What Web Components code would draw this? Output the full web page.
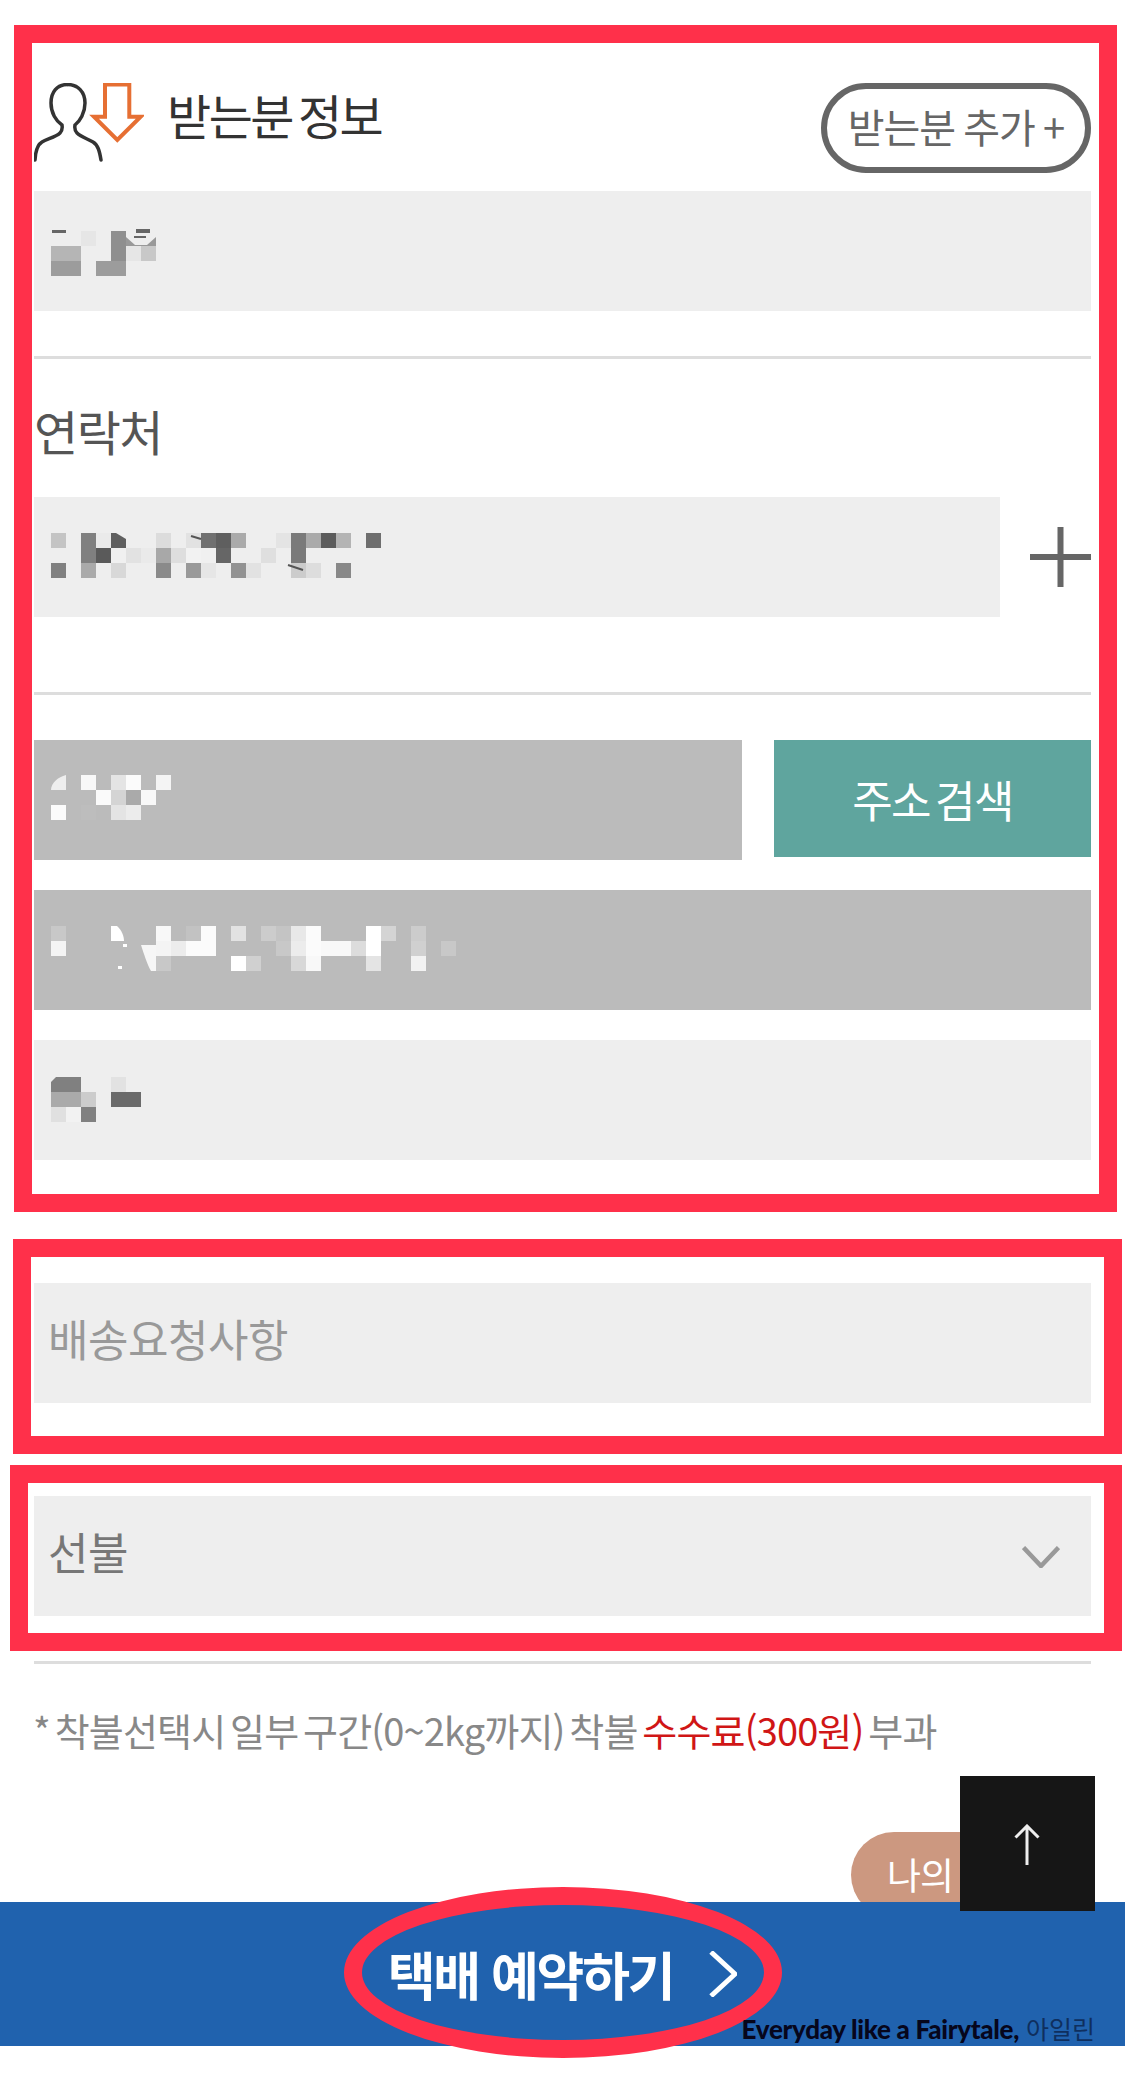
<!doctype html>
<html lang="ko">
<head>
<meta charset="utf-8">
<title>택배 예약</title>
<style>
	html, body { margin: 0; background: #fff; }
	body { width: 1125px; height: 2076px; overflow: hidden; position: relative; font-family: "Noto Sans CJK KR", "Noto Sans", sans-serif; }
</style>
</head>
<body>
	<red-frame style="--ml:14px;--mt:25px;--mr:8px;--pt:40px;--pr:8px;--pb:34px;--pl:2px">
		<receiver-head></receiver-head>
		<form-field style="margin-top:18px;--pad:40px"><pixel-blur id="name"></pixel-blur></form-field>
		<line-rule style="margin-top:45px"></line-rule>
		<field-label>연락처</field-label>
		<phone-row><form-field style="--pad:36px"><pixel-blur id="phone"></pixel-blur></form-field></phone-row>
		<line-rule style="margin-top:75px"></line-rule>
		<zip-row style="margin-top:45px"><form-field tone="dark" style="--pad:35px"><pixel-blur id="zip"></pixel-blur></form-field></zip-row>
		<form-field tone="dark" style="margin-top:30px;--pad:36px"><pixel-blur id="addr"></pixel-blur></form-field>
		<form-field style="margin-top:30px;--pad:37px"><pixel-blur id="detail"></pixel-blur></form-field>
	</red-frame>

	<red-frame style="--ml:13px;--mt:27px;--mr:3px;--pt:26px;--pr:13px;--pb:33px;--pl:3px">
		<form-field center style="color:#999">배송요청사항</form-field>
	</red-frame>

	<red-frame style="--ml:10px;--mt:11px;--mr:3px;--pt:13px;--pr:13px;--pb:17px;--pl:6px">
		<form-field center arrow style="color:#777">선불</form-field>
	</red-frame>

	<fee-note></fee-note>
	<tracking-pill>나의 택배</tracking-pill>
	<booking-bar></booking-bar>
	<scroll-top></scroll-top>

<script>
const mosaics = {
	name: {
		cells: [
			[0, 2, '#e6e6e6'], [0, 4, '#8f8f8f'], [0, 5, '#999'], [0, 6, '#999'],
			[1, 0, '#b5b5b5'], [1, 1, '#b5b5b5'], [1, 4, '#8f8f8f'], [1, 5, '#e6e6e6'], [1, 6, '#c8c8c8'],
			[2, 0, '#9c9c9c'], [2, 1, '#9c9c9c'], [2, 3, '#9c9c9c'], [2, 4, '#9c9c9c']
		],
		// smears the pixelation left behind
		extras: `<path d="M75 0H105V6L96 14H84L75 6Z" fill="#eee"/><rect x="1" y="-1" width="14" height="3" fill="#666"/><rect x="85" y="-2" width="14" height="4" fill="#666"/><rect x="83" y="5" width="12" height="2" fill="#666"/>`
	},
	phone: {
		cells: [
			[0, 0, '#c4c4c4'], [0, 2, '#808080'], [0, 3, '#eaeaea'], [0, 4, '#5f5f5f'], [0, 7, '#dcdcdc'], [0, 9, '#e2e2e2'],
			[0, 10, '#707070'], [0, 11, '#5f5f5f'], [0, 12, '#aaa'], [0, 15, '#e4e4e4'], [0, 16, '#7a7a7a'], [0, 17, '#aaa'],
			[0, 18, '#5c5c5c'], [0, 19, '#b4b4b4'], [0, 21, '#6e6e6e'],
			[1, 2, '#808080'], [1, 3, '#5a5a5a'], [1, 4, '#f0f0f0'], [1, 5, '#e2e2e2'], [1, 6, '#eaeaea'], [1, 7, '#a8a8a8'],
			[1, 8, '#dedede'], [1, 9, '#f2f2f2'], [1, 10, '#f0f0f0'], [1, 11, '#666'], [1, 14, '#dfdfdf'], [1, 16, '#7a7a7a'],
			[2, 0, '#808080'], [2, 2, '#aaa'], [2, 4, '#d8d8d8'], [2, 7, '#8a8a8a'], [2, 9, '#999'], [2, 10, '#e6e6e6'],
			[2, 12, '#929292'], [2, 13, '#e2e2e2'], [2, 16, '#ccc'], [2, 17, '#ddd'], [2, 19, '#888']
		],
		extras: `<path d="M65 0H60V15H75V6Z" fill="#5f5f5f"/><path d="M65 0H75V6Z" fill="#eee"/><path d="M140 3 150 6" stroke="#555" stroke-width="2"/><path d="M237 32 252 37" stroke="#555" stroke-width="2"/>`
	},
	zip: {
		cells: [
			[0, 2, '#f8f8f8'], [0, 4, '#e4e4e4'], [0, 5, '#fbfbfb'], [0, 7, '#f4f4f4'],
			[1, 3, '#fafafa'], [1, 4, '#d4d4d4'], [1, 5, '#aaa'], [1, 6, '#f8f8f8'],
			[2, 0, '#fbfbfb'], [2, 2, '#bdbdbd'], [2, 4, '#e4e4e4'], [2, 5, '#ececec']
		],
		extras: `<path d="M15 0V15H0C0 8 7 2 15 0Z" fill="#eee"/>`
	},
	addr: {
		cells: [
			[0, 0, '#c8c8c8'], [0, 7, '#f8f8f8'], [0, 9, '#c2c2c2'], [0, 10, '#fbfbfb'], [0, 12, '#e2e2e2'],
			[0, 14, '#ccc'], [0, 15, '#c4c4c4'], [0, 16, '#e8e8e8'], [0, 17, '#fbfbfb'], [0, 21, '#fff'], [0, 22, '#d4d4d4'], [0, 24, '#ccc'],
			[1, 0, '#f4f4f4'], [1, 7, '#f4f4f4'], [1, 8, '#ececec'], [1, 9, '#fbfbfb'], [1, 10, '#fbfbfb'],
			[1, 15, '#c8c8c8'], [1, 16, '#ececec'], [1, 17, '#fbfbfb'], [1, 18, '#f8f8f8'], [1, 19, '#f8f8f8'], [1, 20, '#dcdcdc'],
			[1, 21, '#fff'], [1, 24, '#d0d0d0'], [1, 26, '#c8c8c8'],
			[2, 7, '#c8c8c8'], [2, 12, '#fff'], [2, 13, '#d0d0d0'], [2, 16, '#d8d8d8'], [2, 17, '#f8f8f8'], [2, 21, '#e4e4e4'], [2, 24, '#f2f2f2']
		],
		extras: `<path d="M60 0H66C71 4 73 11 73 15H60Z" fill="#fff"/><path d="M90 19H105V45H100C96 38 93 28 90 19Z" fill="#f6f6f6"/><rect x="72" y="18" width="4" height="3" fill="#fff"/><rect x="67" y="40" width="4" height="3" fill="#fff"/>`
	},
	detail: {
		cells: [
			[0, 0, '#808080'], [0, 1, '#808080'], [0, 4, '#e2e2e2'],
			[1, 0, '#aaa'], [1, 1, '#aaa'], [1, 2, '#ccc'], [1, 4, '#6a6a6a'], [1, 5, '#6a6a6a'],
			[2, 0, '#e0e0e0'], [2, 1, '#f2f2f2'], [2, 2, '#808080']
		],
		extras: `<path d="M0 0H5L0 5Z" fill="#eee"/>`
	}
};

const CELL = 15;

function shadow(el, html) {
	el.attachShadow({ mode: 'open' }).innerHTML = html;
}

class RedFrame extends HTMLElement {
	constructor() {
		super();
		shadow(this, `<style>
			:host {
				display: block;
				box-sizing: border-box;
				margin: var(--mt) var(--mr) 0 var(--ml);
				padding: var(--pt) var(--pr) var(--pb) var(--pl);
				border: 18px solid #ff304a;
				background: #fff;
			}
		</style><slot></slot>`);
	}
}

class FormField extends HTMLElement {
	constructor() {
		super();
		const arrow = this.hasAttribute('arrow')
			? `<svg width="38" height="22" viewBox="0 0 38 22"><path d="M1.5 1.5 19 20 36.5 1.5" fill="none" stroke="#999" stroke-width="4.500"/></svg>`
			: '';
		shadow(this, `<style>
			:host {
				display: flex;
				box-sizing: border-box;
				height: 120px;
				padding: var(--pad, 0) 31px 0 17px;
				background: #eee;
				font-size: 44px;
				letter-spacing: -0.500px;
			}
			:host([tone="dark"]) { background: #bbb; }
			:host([center]) { align-items: center; justify-content: space-between; padding: 0 31px 0 14px; }
			:host([center]) span { position: relative; top: -5px; }
			svg { position: relative; top: 1px; }
		</style><span><slot></slot></span>${arrow}`);
	}
}

class PixelBlur extends HTMLElement {
	constructor() {
		super();
		const { cells, extras } = mosaics[this.id];
		const rects = cells
			.map(([row, col, fill]) => `<rect x="${col * CELL}" y="${row * CELL}" width="${CELL}" height="${CELL}" fill="${fill}"/>`)
			.join('');
		shadow(this, `<style>
			:host { display: block; height: 45px; }
			svg { display: block; overflow: visible; }
		</style><svg width="420" height="45"><g shape-rendering="crispEdges">${rects}</g>${extras}</svg>`);
	}
}

class LineRule extends HTMLElement {
	constructor() {
		super();
		shadow(this, `<style>:host { display: block; height: 3px; background: #ddd; }</style>`);
	}
}

class FieldLabel extends HTMLElement {
	constructor() {
		super();
		shadow(this, `<style>
			:host {
				display: block;
				height: 138px;
				padding-top: 41px;
				box-sizing: border-box;
				font-size: 48px;
				line-height: 60px;
				letter-spacing: -1.500px;
				color: #555;
			}
		</style><slot></slot>`);
	}
}

class ReceiverHead extends HTMLElement {
	constructor() {
		super();
		shadow(this, `<style>
			:host { display: flex; justify-content: space-between; align-items: flex-start; height: 90px; }
			.left { display: flex; gap: 23px; }
			svg { display: block; }
			h2 { margin: 0; font-size: 48px; line-height: 62px; font-weight: 400; letter-spacing: -2.500px; word-spacing: -5px; color: #333; }
			button {
				box-sizing: border-box;
				width: 270px;
				height: 90px;
				padding: 0 0 4px;
				border: 6px solid #666;
				border-radius: 45px;
				background: #fff;
				font: inherit;
				font-size: 40px;
				letter-spacing: -1px;
				word-spacing: -2px;
				color: #666;
			}
		</style>
		<div class="left">
			<svg width="110" height="80" viewBox="34 83 110 80" fill="none">
				<g transform="translate(34 83)" stroke="#333" stroke-width="3.500" stroke-linecap="round">
					<path d="M33.500 1.500C23 1.500 17 9 17 20 17 30 22 38 28 42 28.500 45 28 48 26 50 22 54 13 56 8 59 3 62 1.500 68 1 77"/>
					<path d="M33.500 1.500C44 1.500 51 9 51 20 51 30 46 38 41 42 40.500 45 41 48 43 50 47 54 54 56 59 59 64 62 65.500 68 67 77"/>
				</g>
				<path d="M105 84.500H129.300V116.700H140.700L117.300 140 94 116.700H105Z" stroke="#e66f33" stroke-width="4"/>
			</svg>
			<h2>받는분 정보</h2>
		</div>
		<button>받는분 추가 +</button>`);
	}
}

class PhoneRow extends HTMLElement {
	constructor() {
		super();
		shadow(this, `<style>
			:host { display: flex; justify-content: space-between; align-items: center; }
			::slotted(*) { width: 966px; }
			svg { display: block; }
		</style><slot></slot>
		<svg width="61" height="60" viewBox="0 0 61 60"><path d="M0 30H61M30.500 0V60" stroke="#666" stroke-width="6"/></svg>`);
	}
}

class ZipRow extends HTMLElement {
	constructor() {
		super();
		shadow(this, `<style>
			:host { display: flex; justify-content: space-between; align-items: flex-start; }
			::slotted(*) { width: 708px; }
			button {
				width: 317px;
				height: 117px;
				padding: 0;
				border: 0;
				background: #5fa59e;
				color: #fff;
				font: inherit;
				font-size: 44px;
				letter-spacing: -1.500px;
				word-spacing: -6px;
			}
		</style><slot></slot><button>주소 검색</button>`);
	}
}

class FeeNote extends HTMLElement {
	constructor() {
		super();
		shadow(this, `<style>
			:host { display: block; margin: 10px 34px 0; height: 241px; }
			hr { margin: 0; height: 3px; border: 0; background: #ddd; }
			p { margin: 40px 0 0 -1px; font-size: 38px; line-height: 52px; letter-spacing: -0.850px; word-spacing: -5px; color: #888; white-space: nowrap; }
			b { font-weight: 400; color: #d01616; }
		</style><hr><p>* 착불선택시 일부 구간(0~2kg까지) 착불 <b>수수료(300원)</b> 부과</p>`);
	}
}

class TrackingPill extends HTMLElement {
	constructor() {
		super();
		shadow(this, `<style>
			:host {
				position: absolute;
				left: 851px;
				top: 1832px;
				box-sizing: border-box;
				width: 224px;
				height: 86px;
				padding: 0 0 2px 36px;
				display: flex;
				align-items: center;
				border-radius: 43px;
				background: #cc9880;
				color: #fff;
				font-size: 37px;
				letter-spacing: -1px;
			}
		</style><slot></slot>`);
	}
}

class BookingBar extends HTMLElement {
	constructor() {
		super();
		shadow(this, `<style>
			:host {
				position: relative;
				display: flex;
				align-items: center;
				justify-content: center;
				gap: 36px;
				height: 144px;
				background: #2062ae;
				color: #fff;
			}
			strong { font-size: 52px; line-height: 60px; letter-spacing: -2.300px; font-weight: 700; }
			svg { display: block; }
			.ring {
				position: absolute;
				left: 344px;
				top: -15px;
				box-sizing: border-box;
				width: 438px;
				height: 171px;
				border: 18.500px solid #ff304a;
				border-radius: 50%;
			}
			.stamp {
				position: absolute;
				right: 30px;
				bottom: -1px;
				font-size: 25px;
				line-height: 36px;
				white-space: nowrap;
				color: #0f2f5e;
			}
			.stamp b { font-family: Lato, sans-serif; font-size: 26px; font-weight: 900; color: #06061c; letter-spacing: -0.300px; }
		</style>
		<strong>택배 예약하기</strong>
		<svg width="28" height="46" viewBox="0 0 28 46"><path d="M2 1 26 23 2 45" fill="none" stroke="#fff" stroke-width="5"/></svg>
		<div class="ring"></div>
		<div class="stamp"><b>Everyday like a Fairytale,</b> 아일린</div>`);
	}
}

class ScrollTop extends HTMLElement {
	constructor() {
		super();
		shadow(this, `<style>
			:host {
				position: absolute;
				left: 960px;
				top: 1776px;
				width: 135px;
				height: 135px;
				background: #161616;
			}
			svg { position: absolute; left: 54px; top: 48px; }
		</style><svg width="26" height="42" viewBox="0 0 26 42" fill="none" stroke="#eee" stroke-width="3"><path d="M13 2V41M1.500 13.500 13 2 24.500 13.500"/></svg>`);
	}
}

customElements.define('red-frame', RedFrame);
customElements.define('form-field', FormField);
customElements.define('pixel-blur', PixelBlur);
customElements.define('line-rule', LineRule);
customElements.define('field-label', FieldLabel);
customElements.define('receiver-head', ReceiverHead);
customElements.define('phone-row', PhoneRow);
customElements.define('zip-row', ZipRow);
customElements.define('fee-note', FeeNote);
customElements.define('tracking-pill', TrackingPill);
customElements.define('booking-bar', BookingBar);
customElements.define('scroll-top', ScrollTop);
</script>
</body>
</html>
